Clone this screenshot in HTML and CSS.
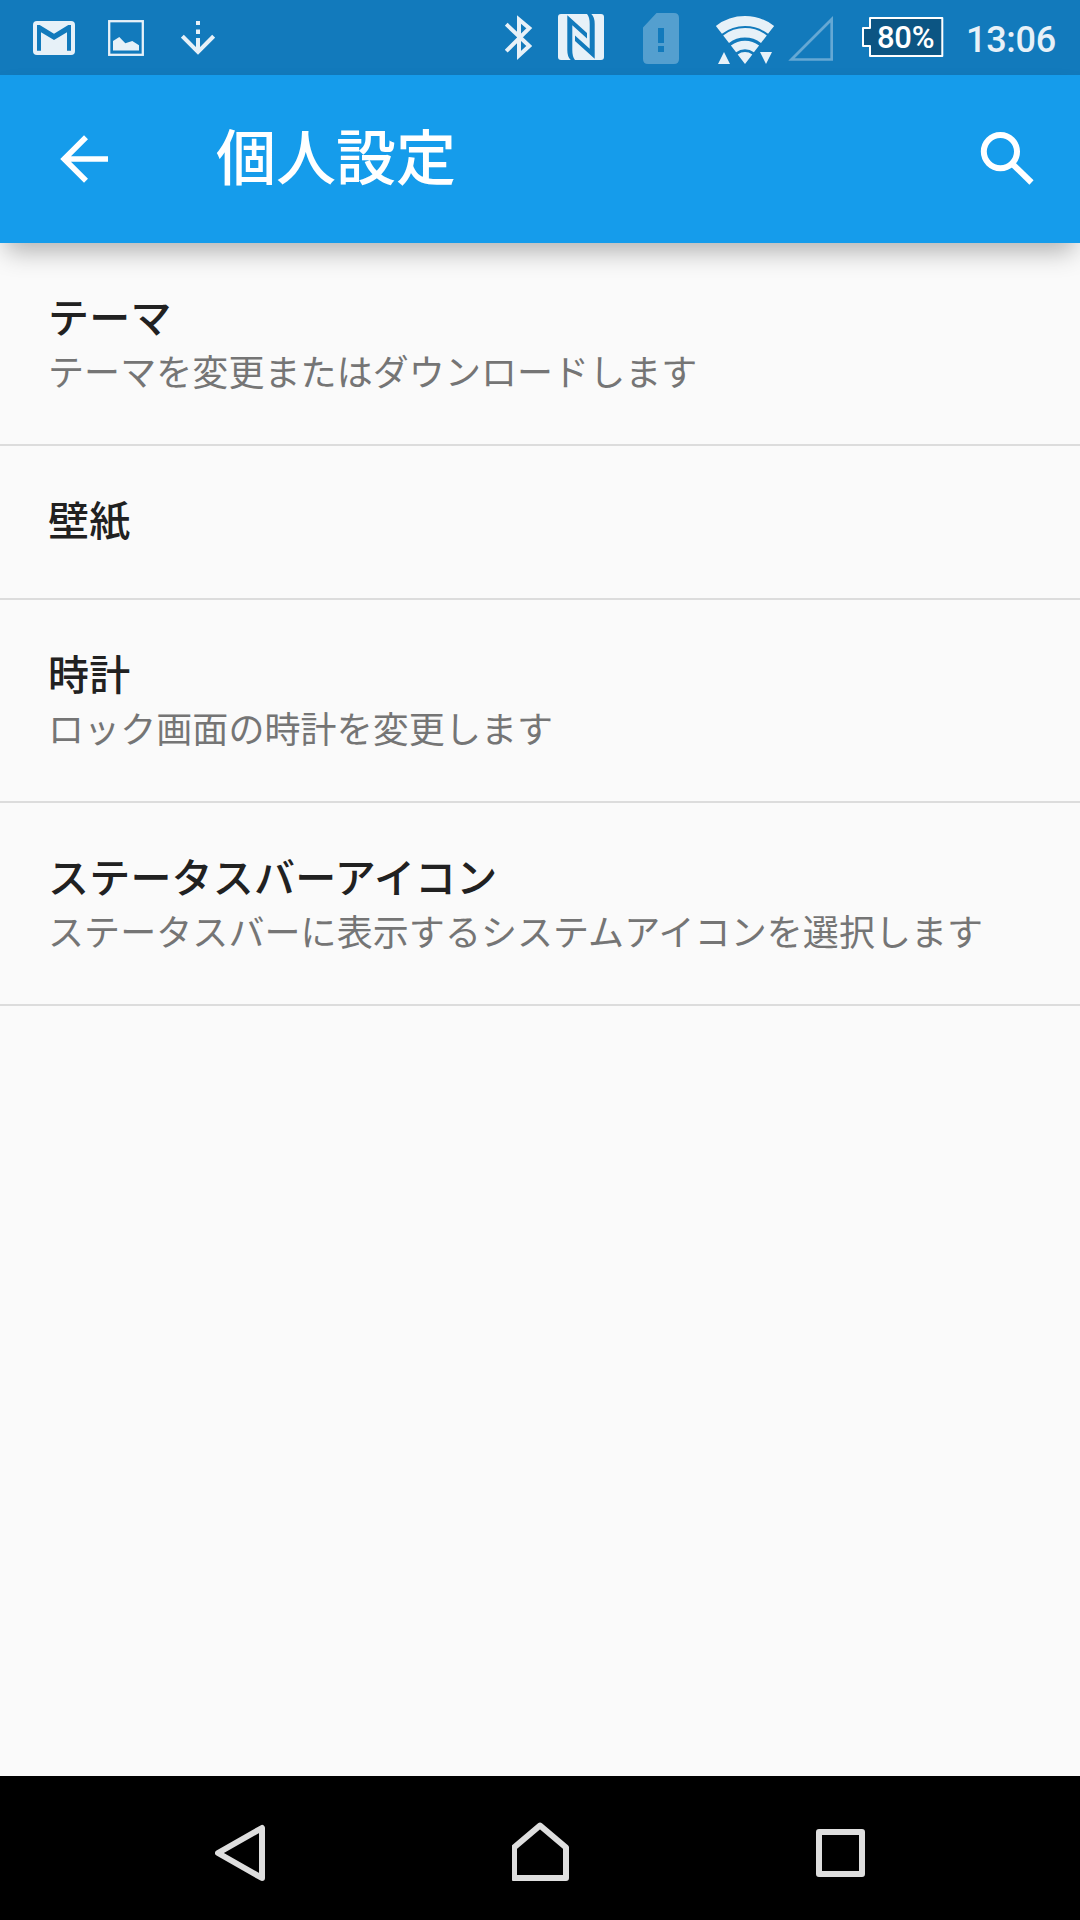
FILE: index.html
```html
<!DOCTYPE html>
<html lang="ja">
<head>
    <meta charset="UTF-8">
    <meta name="viewport" content="width=device-width, initial-scale=1.0">
    <title>個人設定</title>
    <link rel="stylesheet" href="styles.css">
</head>
<body>
    <div class="screen">
        <div class="status-bar">
            <div class="notifications">
                <svg width="42" height="75" viewBox="33 0 42 75">
                    <rect class="light" x="33" y="21" width="42" height="34" rx="4"/>
                    <path class="cutout" d="M37 50.7V25h2.7L54 33.7 68.300 25H71v25.700h-4V32.300L54 40 41 32.300v18.400z"/>
                </svg>
                <svg width="36" height="75" viewBox="108 0 36 75">
                    <rect class="light-line" x="109.200" y="21.200" width="33.600" height="33.600" stroke-width="2.300"/>
                    <path class="light" d="M113 50.500V41l6.300-4 6 6.200 7-2.200 6.700 4.300v5.200z"/>
                </svg>
                <svg class="download" width="34" height="75" viewBox="181 0 34 75">
                    <path class="light" d="M196 21h4v4h-4zM196 29.500h4v4.500h-4zM196 38h4v13h-4z"/>
                    <path class="light-line" d="M182.400 36.200L198 51.800l15.600-15.600" stroke-width="4"/>
                </svg>
            </div>
            <div class="system-icons">
                <svg class="bluetooth" width="28" height="75" viewBox="505 0 28 75">
                    <path class="light-line" d="M506.200 24.200L529.300 46 519 55.500v-36l10.300 8.700-23.100 23" stroke-width="4"/>
                </svg>
                <svg class="nfc" width="46" height="75" viewBox="558 0 46 75">
                    <rect class="light" x="558" y="14" width="46" height="46" rx="3"/>
                    <path class="cutout" d="M567.300 15.300L587 33v5.500L572.300 25.300V50q0 7 2.700 10h-4.300q-3.400-3-3.400-10z"/>
                    <path class="cutout" d="M594.700 58.700L575 41v-5.500l14.700 13.200V24q0-7-2.700-10h4.300q3.400 3 3.400 10z"/>
                </svg>
                <svg class="sim" width="36" height="75" viewBox="643 0 36 75">
                    <path class="dim" fill-rule="evenodd" d="M656.500 13H674q5 0 5 5v41q0 5-5 5h-26q-5 0-5-5V27.500zM658 28v15h6V28zM658 46v6h6v-6z"/>
                </svg>
                <svg class="wifi" width="60" height="75" viewBox="715 0 60 75">
                    <path class="light-line" d="M718.900 29.900a43 43 0 0 1 52.200 0" stroke-width="10"/>
                    <path class="light-line" d="M726.100 39.200a31.200 31.200 0 0 1 37.800 0" stroke-width="9.600"/>
                    <path class="light-line" d="M733.500 48.900a19 19 0 0 1 23 0" stroke-width="8.600"/>
                    <path class="light" d="M745 64l-7.300-9.500a12 12 0 0 1 14.600 0zM718 64l6-12 6 12zM760 52h12l-6 12z"/>
                </svg>
                <svg class="signal" width="45" height="75" viewBox="788 0 45 75">
                    <path class="dim-line" d="M791.500 59.500h40.200V19.300z" stroke-width="2.700"/>
                </svg>
                <div class="battery">
                    <svg width="82" height="75" viewBox="862 0 82 75">
                        <path class="battery-case" d="M870 18h72.300v38H870V46h-7V28h7z"/>
                    </svg>
                    <span class="battery-level">80%</span>
                </div>
                <span class="clock">13:06</span>
            </div>
        </div>

        <div class="app-bar">
            <svg width="48" height="60" viewBox="60 129 48 60">
                <path class="white-line" d="M108 159H65M86 137.200L64.200 159 86 180.800" stroke-width="5.600"/>
            </svg>
            <h1>個人設定</h1>
            <svg class="search" width="54" height="60" viewBox="980 129 54 60">
                <circle class="white-line" cx="1000.400" cy="151.600" r="16.600" stroke-width="6"/>
                <path class="white-line" d="M1012.500 164l19 18.500" stroke-width="6"/>
            </svg>
        </div>

        <div class="settings">
            <div class="item">
                <div class="title">テーマ</div>
                <div class="summary">テーマを変更またはダウンロードします</div>
            </div>
            <div class="item item-single">
                <div class="title">壁紙</div>
            </div>
            <div class="item">
                <div class="title">時計</div>
                <div class="summary">ロック画面の時計を変更します</div>
            </div>
            <div class="item">
                <div class="title">ステータスバーアイコン</div>
                <div class="summary">ステータスバーに表示するシステムアイコンを選択します</div>
            </div>
        </div>

        <div class="nav-bar">
            <svg width="50" height="144" viewBox="215 1776 50 144">
                <path class="nav-line" d="M262 1828v50l-44-25z"/>
            </svg>
            <svg width="58" height="144" viewBox="512 1776 58 144">
                <path class="nav-line" d="M514 1878v-30.500l26-22 26 22V1878z"/>
            </svg>
            <svg width="50" height="144" viewBox="816 1776 50 144">
                <rect class="nav-line" x="819" y="1832" width="43" height="42"/>
            </svg>
        </div>
    </div>
</body>
</html>
```
FILE: styles.css
```css
body {
    margin: 0;
    font-family: Roboto, "Noto Sans CJK JP", sans-serif;
    background-color: #fafafa;
}
svg {
    display: block;
    flex-shrink: 0;
}
.screen {
    display: flex;
    flex-direction: column;
    width: 1080px;
    height: 1920px;
    overflow: hidden;
}

/* Status bar */
.status-bar {
    display: flex;
    justify-content: space-between;
    height: 75px;
    padding: 0 24px 0 33px;
    background-color: #127abc;
}
.notifications, .system-icons {
    display: flex;
}
.notifications {
    gap: 33px;
}
.download {
    margin-left: 4px;
}
.nfc {
    margin-left: 25px;
}
.sim {
    margin-left: 39px;
}
.wifi {
    margin-left: 36px;
}
.signal {
    margin-left: 13px;
}
.battery {
    position: relative;
    margin-left: 29px;
}
.battery-level {
    position: absolute;
    top: 0;
    left: 15px;
    line-height: 75px;
    font-size: 31px;
    font-weight: 500;
    letter-spacing: -0.3px;
    color: #fff;
}
.clock {
    width: 90px;
    margin-left: 22px;
    line-height: 80px;
    font-size: 36px;
    font-weight: 500;
    letter-spacing: -0.3px;
    color: #e7f1f8;
    white-space: nowrap;
}
.light {
    fill: #e7f1f8;
}
.light-line {
    fill: none;
    stroke: #e7f1f8;
}
.cutout {
    fill: #127abc;
}
.dim {
    fill: #549fcf;
}
.dim-line {
    fill: none;
    stroke: #65a8d4;
}
.battery-case {
    fill: #0c5583;
    stroke: #fff;
    stroke-width: 2;
    stroke-linejoin: round;
}

/* App bar */
.app-bar {
    display: flex;
    align-items: center;
    height: 168px;
    padding: 0 46px 0 60px;
    background-color: #159ceb;
    box-shadow: 0 14px 24px -6px rgba(0,0,0,0.3);
}
.app-bar h1 {
    flex: 1;
    margin: 2px 0 0 108px;
    font-size: 60px;
    font-weight: 500;
    line-height: 80px;
    color: #fff;
}
.white-line {
    fill: none;
    stroke: #fff;
}

/* Settings list */
.settings {
    flex: 1;
}
.item {
    padding: 48px 48px 43px;
    border-bottom: 2px solid #dcdcdc;
}
.item-single {
    padding-bottom: 48px;
}
.title {
    height: 56px;
    font-size: 41px;
    font-weight: 500;
    line-height: 56px;
    letter-spacing: 0.2px;
    color: #212121;
}
.summary {
    height: 54px;
    font-size: 36px;
    line-height: 54px;
    letter-spacing: 0.08px;
    color: #757575;
}

/* Navigation bar */
.nav-bar {
    display: flex;
    justify-content: space-between;
    height: 144px;
    padding: 0 214px 0 215px;
    background-color: #000;
}
.nav-line {
    fill: none;
    stroke: #dedede;
    stroke-width: 6;
    stroke-linejoin: round;
}
```
